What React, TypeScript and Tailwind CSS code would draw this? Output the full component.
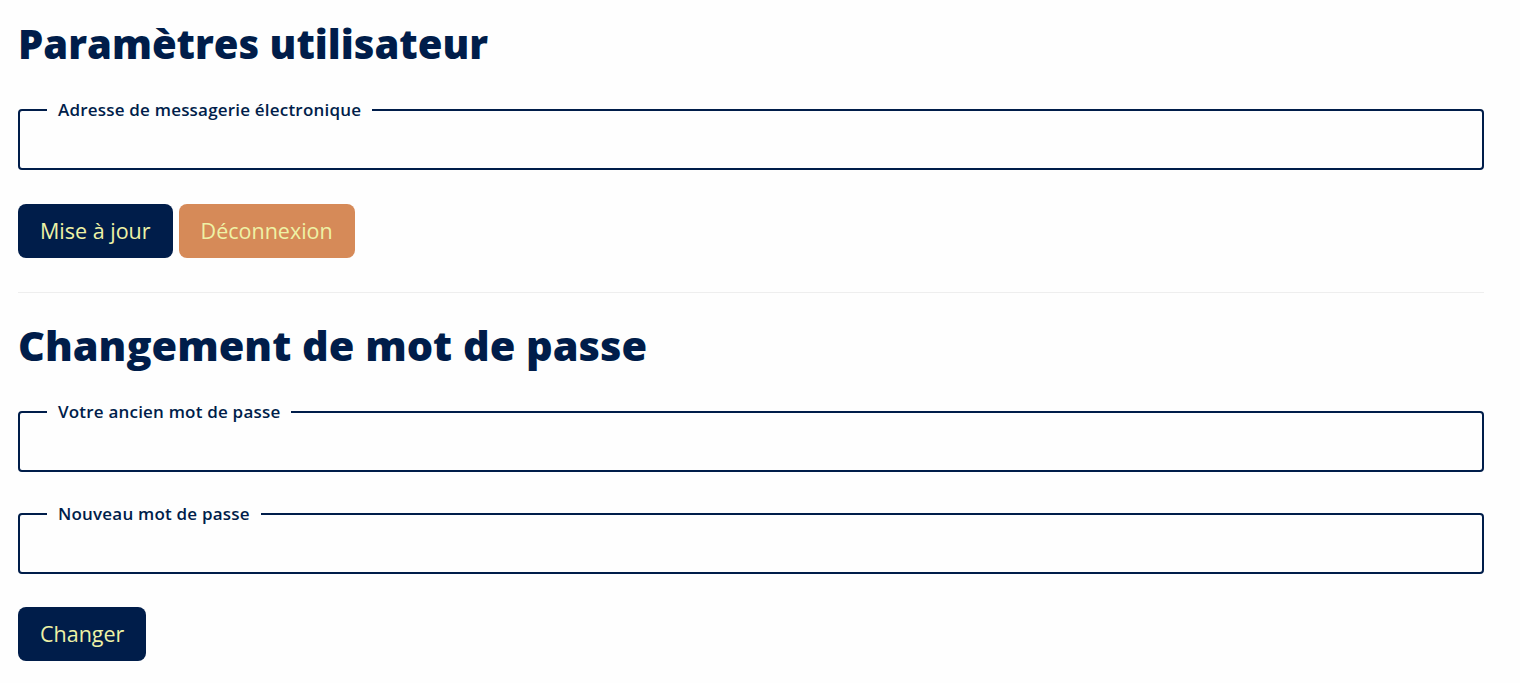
import { useState } from 'react';

const Field = ({ label, type = 'text' }: { label: string; type?: string }) => {
    const [value, setValue] = useState('');
    return (
        <fieldset className="border-2 border-[#001d4a] rounded-[4px] pl-[27px] pr-3 pb-0 m-0">
            <legend className="px-[11px] text-[17px] leading-[20px] font-semibold tracking-[0.2px] text-[#001d4a]">{label}</legend>
            <input
                type={type}
                value={value}
                onChange={(e) => setValue(e.target.value)}
                className="w-full h-[48px] outline-none bg-transparent text-[16px] text-[#001d4a]"
            />
        </fieldset>
    );
};

const Button = ({ children, orange }: { children: React.ReactNode; orange?: boolean }) => (
    <button
        className={`h-[54px] px-[22px] rounded-[8px] text-[21.5px] text-[#eef2a6] ${orange ? 'bg-[#d68a58]' : 'bg-[#001d4a]'}`}
    >
        {children}
    </button>
);

export default function App() {
    return (
        <div className="min-h-screen bg-[#fefefe] px-[18px] pt-[16px] pr-[36px] text-[#001d4a]" style={{ fontFamily: '"Open Sans", Lato, sans-serif' }}>
            {/* USER SETTINGS */}
            <h1 className="text-[40px] leading-[56px] font-extrabold">Paramètres utilisateur</h1>
            <div className="mt-[28px]">
                <Field label="Adresse de messagerie électronique" type="email" />
            </div>
            <div className="flex gap-[6px] mt-[34px]">
                <Button>Mise à jour</Button>
                <Button orange>Déconnexion</Button>
            </div>

            <hr className="mt-[34px] border-t border-[#eeeeee]" />

            {/* PASSWORD */}
            <h1 className="mt-[24px] text-[41.5px] leading-[56px] font-extrabold">Changement de mot de passe</h1>
            <div className="mt-[29px] flex flex-col gap-[32px]">
                <Field label="Votre ancien mot de passe" type="password" />
                <Field label="Nouveau mot de passe" type="password" />
            </div>
            <div className="mt-[33px]">
                <Button>Changer</Button>
            </div>
        </div>
    );
}
